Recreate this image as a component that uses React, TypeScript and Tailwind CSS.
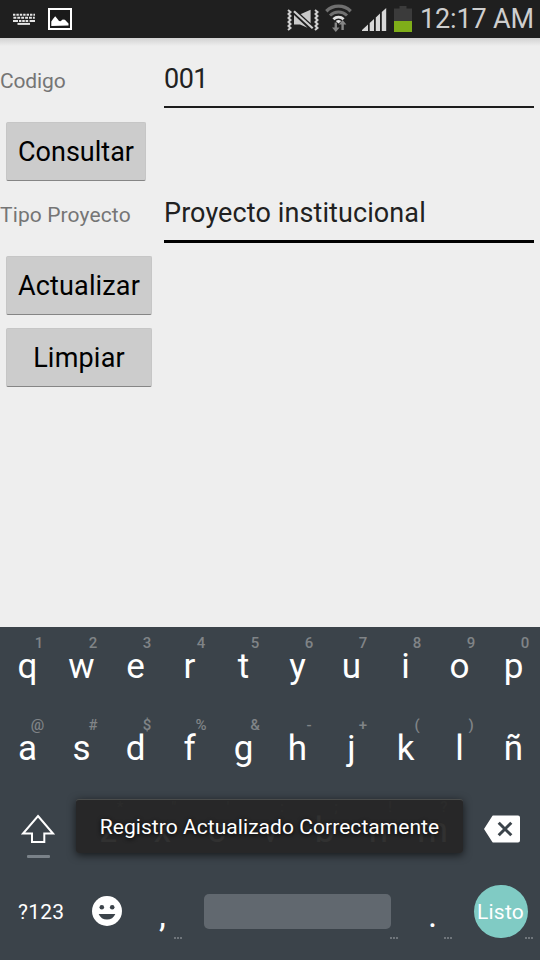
import React from "react";

const topRow = [
  ["q", "1"], ["w", "2"], ["e", "3"], ["r", "4"], ["t", "5"],
  ["y", "6"], ["u", "7"], ["i", "8"], ["o", "9"], ["p", "0"],
];
const middleRow = [
  ["a", "@"], ["s", "#"], ["d", "$"], ["f", "%"], ["g", "&"],
  ["h", "-"], ["j", "+"], ["k", "("], ["l", ")"], ["ñ", ""],
];
const bottomRow = [
  ["z", "*"], ["x", "\""], ["c", "'"], ["v", ":"], ["b", ";"], ["n", "!"], ["m", "?"],
];

function Key({ letter, hint }: { letter: string; hint: string }) {
  return (
    <div className="flex h-[82px] w-[54px] flex-col items-center pt-[6px]">
      <span className={"h-[21px] text-[15px] leading-5 font-medium text-[#808487] " + (hint === "@" ? "pl-[21px]" : "pl-6")}>{hint}</span>
      <span className="pl-px text-[35px] leading-[26px] text-white">{letter}</span>
    </div>
  );
}

function Dots({ className = "" }: { className?: string }) {
  return (
    <span className={"flex gap-[1px] " + className}>
      <i className="h-[2px] w-[2px] bg-[#6f757b]" />
      <i className="h-[2px] w-[2px] bg-[#6f757b]" />
      <i className="h-[2px] w-[2px] bg-[#6f757b]" />
    </span>
  );
}

function FormButton({ children, className }: { children: React.ReactNode; className: string }) {
  return (
    <button
      className={
        "ml-[6px] flex h-[59px] items-center justify-center rounded-[2px] border border-[#c6c6c6] border-b-[#858585] bg-[#cccccc] text-[27px] leading-8 whitespace-nowrap text-black " +
        className
      }
    >
      {children}
    </button>
  );
}

function StatusBar() {
  return (
    <header className="flex h-[38px] items-center bg-[#1f1f1f]">
      <svg width="80" height="38" viewBox="0 0 80 38" className="shrink-0">
        <g stroke="#e4e4e4" strokeWidth="2" fill="none">
          <path d="M13 14.7H35" strokeDasharray="2.4 1" />
          <path d="M13.4 17.8H34.8" strokeDasharray="2.9 1" />
          <path d="M13 20.9H18M19 20.9h2.4M22.2 20.9h2.6M25.6 20.9h2.6M29.6 20.9H35" />
          <path d="M17.5 23.9H30" />
        </g>
        <rect x="49" y="9" width="22" height="20" fill="#1a1a1a" stroke="#fff" strokeWidth="2" />
        <path d="M51.3 26V21.6L53 19l2.2-2.7 2.3 2.7 1.5 2 1.5.2 2.2-1.6 2.2.2 3.6 3.6v2z" fill="#fff" />
      </svg>
      <span className="flex-1" />
      <svg width="130" height="38" viewBox="284 0 130 38" className="shrink-0">
        <path d="M288 10l2.5 2-2 2 2 2-2 2 2 2-2 2 2 2-2 2 2 2-2.5 2M315 10l2.5 2-2 2 2 2-2 2 2 2-2 2 2 2-2 2 2 2-2.5 2" fill="none" stroke="#cfcfcf" strokeWidth="2" />
        <path d="M294 15l13.5 12.8-7.5-3.3h-6zM299.8 14.6l10.8-4.9v14.3z" fill="#c9c9c9" />
        <path d="M294 10.8l19 17.4" stroke="#1f1f1f" strokeWidth="4.2" />
        <path d="M294 11.3l18.7 17" stroke="#cfcfcf" strokeWidth="2.2" />
        <g fill="none">
          <path d="M326.3 11.2a17.4 17.4 0 0 1 24.4 0" stroke="#707070" strokeWidth="3.3" />
          <path d="M330 15.5a12.2 12.2 0 0 1 17 0" stroke="#707070" strokeWidth="3" />
          <path d="M333.4 19.2a7.4 7.4 0 0 1 10.2 0" stroke="#dedede" strokeWidth="2.8" />
        </g>
        <path d="M335.8 20.9q2.7-1.7 5.4 0l-2.7 2.6z" fill="#e5e5e5" />
        <path d="M334.6 22.5h2.4v5h2.6l-3.8 4.5-3.8-4.5h2.6zM341.4 30v-5.4h-2.6l3.8-4.5 3.8 4.5h-2.6V30z" fill="#858585" />
        <path d="M362 31v-1l6-5.5V31zM369.7 31v-8l4.3-4v12zM375.8 31V17.5l4.2-4V31zM381.8 31V12l4.4-4v23z" fill="#d8d8d8" />
        <path d="M394 21V8.5h5.5V6h7v2.5h5.5V21z" fill="#3b3b3b" />
        <rect x="394" y="21" width="18" height="11" fill="#7fae19" />
      </svg>
      <span className="w-[126px] pl-[6px] text-[27px] leading-[38px] tracking-[-0.15px] whitespace-nowrap text-[#cecece]">12:17 AM</span>
    </header>
  );
}

export default function App() {
  return (
    <div className="relative flex h-[960px] w-[540px] flex-col overflow-hidden bg-[#eeeeee] font-[Roboto,'Noto_Sans',sans-serif]">
      <StatusBar />
      <main className="flex h-[589px] flex-col">
        <div className="h-2 bg-linear-to-b from-[#d2d2d2] to-[#eeeeee]" />
        <div className="flex h-[62px]">
          <label className="w-[164px] pt-[21px] text-[21px] leading-7 tracking-[-0.15px] text-[#757575]">Codigo</label>
          <div className="mr-[6px] flex-1 border-b-2 border-[#1c1c1c] pt-[17px] text-[27px] leading-8 tracking-[-0.5px] whitespace-nowrap text-[#212121]">001</div>
        </div>
        <FormButton className="mt-[14px] w-[140px]">Consultar</FormButton>
        <div className="flex h-[62px]">
          <label className="w-[164px] pt-5 text-[21px] leading-7 tracking-[0.12px] text-[#757575]">Tipo Proyecto</label>
          <div className="mr-[6px] flex-1 border-b-[3px] border-black pt-4 text-[27px] leading-8 tracking-[0.1px] whitespace-nowrap text-[#212121]">Proyecto institucional</div>
        </div>
        <FormButton className="mt-[13px] w-[146px] tracking-[0.15px]">Actualizar</FormButton>
        <FormButton className="mt-[13px] w-[146px] tracking-[0.2px]">Limpiar</FormButton>
      </main>

      <section className="h-[333px] bg-[#3b434a]">
        <div className="flex">
          {topRow.map(([l, h]) => <Key key={l} letter={l} hint={h} />)}
        </div>
        <div className="flex">
          {middleRow.map(([l, h]) => <Key key={l} letter={l} hint={h} />)}
        </div>
        <div className="flex">
          <div className="flex w-[81px] flex-col items-start pt-[23px] pl-5">
            <svg width="36" height="30" viewBox="0 0 36 30">
              <path d="M18 2L33 19.5h-8.7V28H12v-8.5H3z" fill="none" stroke="#fff" strokeWidth="2" />
            </svg>
            <span className="mt-[11px] ml-[7px] h-[3px] w-[23px] rounded-[1px] bg-[#7a8289]" />
          </div>
          {bottomRow.map(([l, h]) => <Key key={l} letter={l} hint={h} />)}
          <div className="pt-[24px] pl-[25px]">
            <svg width="36" height="28" viewBox="0 0 36 28">
              <path d="M9 0.5H34q2 0 2 2V25.5q0 2-2 2H9Q8.5 27.5 8 26.5L0 14 8 1.5Q8.5.5 9 .5z" fill="#fff" />
              <path d="M14.7 7.7l12.6 12.6M27.3 7.7L14.7 20.3" stroke="#3b434a" strokeWidth="3" />
            </svg>
          </div>
        </div>
        <div className="flex h-[82px]">
          <span className="w-[92px] pt-[25px] pl-[18px] text-[21px] leading-7 tracking-[0.2px] text-white">?123</span>
          <svg width="30" height="30" viewBox="0 0 30 30" className="mt-[23px]">
            <circle cx="15" cy="15" r="15" fill="#fff" />
            <circle cx="9.8" cy="11.3" r="2.3" fill="#3b434a" />
            <circle cx="20.2" cy="11.3" r="2.3" fill="#3b434a" />
            <path d="M6.7 18h16.6a9 9 0 0 1-16.6 0z" fill="#3b434a" />
          </svg>
          <div className="flex w-[82px] flex-col pl-[36px]">
            <span className="mt-[22px] h-[42px] pl-px text-[35px] leading-[42px] text-white">,</span>
            <Dots className="ml-4" />
          </div>
          <div className="flex w-[196px] flex-col">
            <span className="mt-[21px] h-[35px] w-[187px] rounded-[5px] bg-[#61686f]" />
            <Dots className="mt-[8px] ml-[186px]" />
          </div>
          <div className="flex w-[73px] flex-col pl-[27px]">
            <span className="mt-[22px] h-[42px] pl-px text-[35px] leading-[42px] text-white">.</span>
            <Dots className="ml-[17px]" />
          </div>
          <div className="flex flex-col">
            <span className="mt-[12px] ml-px flex h-[53px] w-[54px] items-center justify-center rounded-full bg-[#80cbc4] pt-[2px] pr-px text-[21px] tracking-[0.2px] text-white">Listo</span>
            <Dots className="-mt-px ml-[52px]" />
          </div>
        </div>
      </section>

      <div className="absolute top-[799px] left-[76px] flex h-[54px] w-[387px] items-center justify-center rounded-[3px] border-t border-[#4a4c4b] bg-[#262626]/95 pt-[2px] text-[21px] tracking-[0.05px] whitespace-nowrap text-white shadow-[0_2px_8px_rgba(0,0,0,0.65)] [text-shadow:0_1px_4px_#000]">
        Registro Actualizado Correctamente
      </div>
    </div>
  );
}
